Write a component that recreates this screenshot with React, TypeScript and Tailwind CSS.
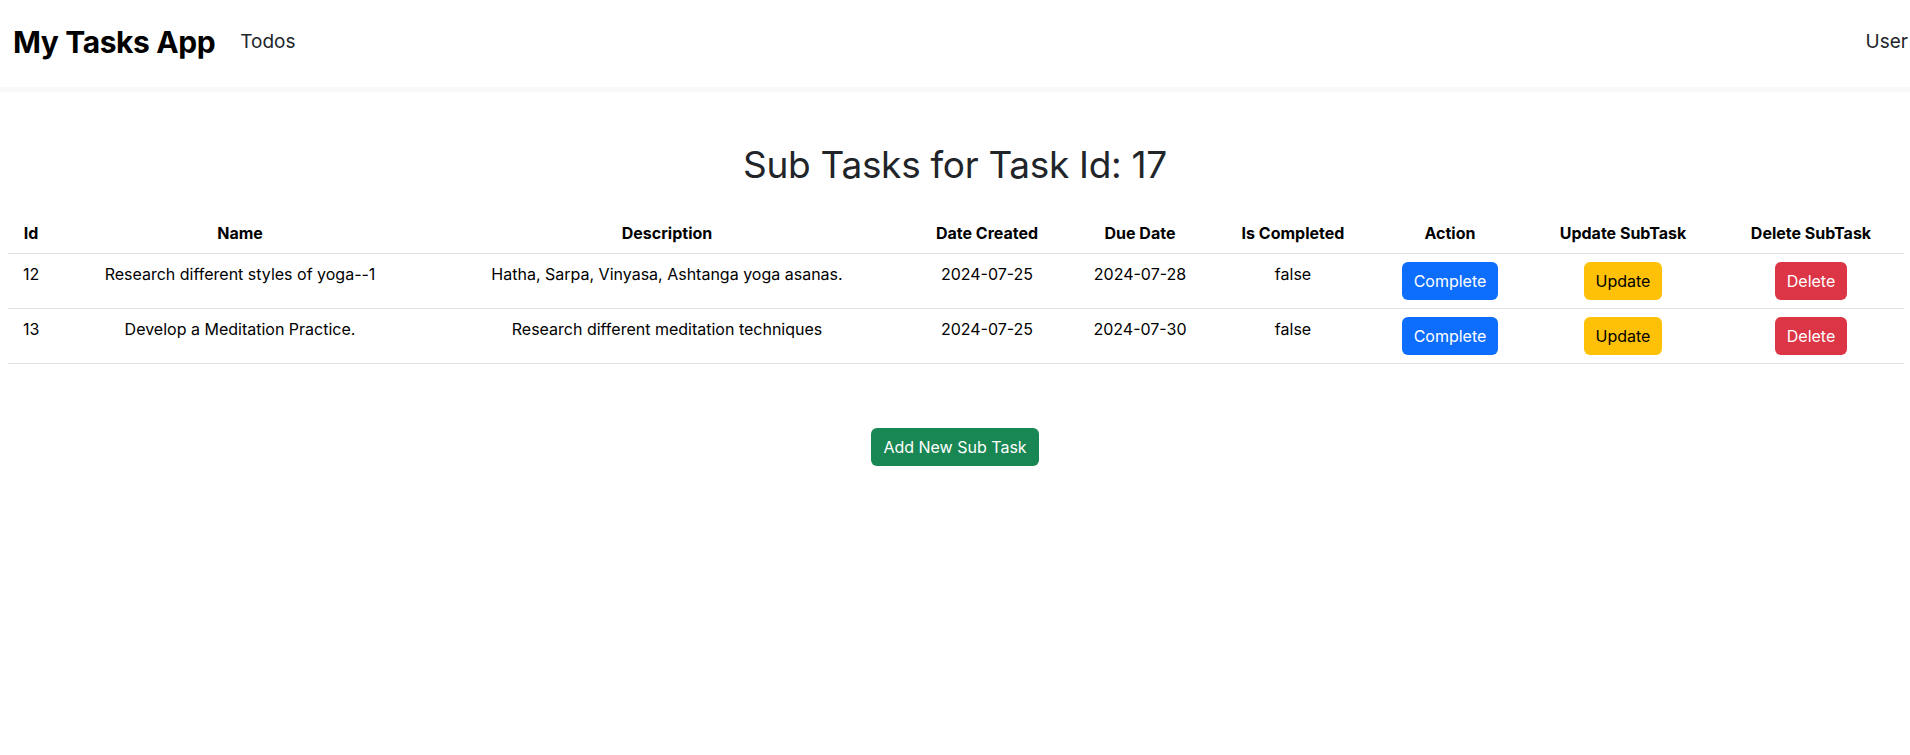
import { FC } from 'react'

interface SubTask {
    id: number;
    name: string;
    description: string;
    dateCreated: string;
    dueDate: string;
    isCompleted: boolean;
}

const subTasks: SubTask[] = [
    { id: 12, name: 'Research different styles of yoga--1', description: 'Hatha, Sarpa, Vinyasa, Ashtanga yoga asanas.', dateCreated: '2024-07-25', dueDate: '2024-07-28', isCompleted: false },
    { id: 13, name: 'Develop a Meditation Practice.', description: 'Research different meditation techniques', dateCreated: '2024-07-25', dueDate: '2024-07-30', isCompleted: false },
];

const headers = ['Id', 'Name', 'Description', 'Date Created', 'Due Date', 'Is Completed', 'Action', 'Update SubTask', 'Delete SubTask'];

const App: FC = () => {
    return (
        <div className="min-h-screen bg-white text-black font-['Inter',sans-serif] text-base">
            {/* navbar */}
            <nav className="h-[87px] flex items-center justify-between pl-[13px] border-b-[5px] border-[#f8f9fa] box-content">
                <div className="flex items-center mt-[-3px]">
                    <span className="text-[30px] font-bold tracking-[-0.4px]">My Tasks App</span>
                    <a href="#" className="ml-[25px] text-[19px] text-[#212529]">Todos</a>
                </div>
                <a href="#" className="text-[19px] text-[#212529] mr-[2px] mt-[-3px]">User</a>
            </nav>

            <h1 className="text-center text-[37px] leading-[1.2] text-[#212529] mt-[51px] mb-[26px] tracking-[-0.3px]">
                Sub Tasks for Task Id: 17
            </h1>

            <div className="pl-2 pr-[6px]">
                <table className="w-full table-fixed text-center">
                    <colgroup>
                        <col className="w-[46px]" />
                        <col className="w-[372px]" />
                        <col className="w-[482px]" />
                        <col className="w-[158px]" />
                        <col className="w-[148px]" />
                        <col className="w-[158px]" />
                        <col className="w-[156px]" />
                        <col className="w-[190px]" />
                        <col className="w-[186px]" />
                    </colgroup>
                    <thead>
                        <tr className="border-b border-[#dee2e6]">
                            {headers.map((h) => (
                                <th key={h} className="px-2 py-2 font-bold whitespace-nowrap">{h}</th>
                            ))}
                        </tr>
                    </thead>
                    <tbody>
                        {subTasks.map((t) => (
                            <tr key={t.id} className="border-b border-[#dee2e6] align-top">
                                <td className="py-2 pr-2 text-left pl-[15px]">{t.id}</td>
                                <td className="px-2 py-2 whitespace-nowrap">{t.name}</td>
                                <td className="px-2 py-2 whitespace-nowrap">{t.description}</td>
                                <td className="px-2 py-2">{t.dateCreated}</td>
                                <td className="px-2 py-2">{t.dueDate}</td>
                                <td className="px-2 py-2">{String(t.isCompleted)}</td>
                                <td className="px-2 py-2">
                                    <button className="h-[38px] px-3 rounded-md bg-[#0d6efd] text-white">Complete</button>
                                </td>
                                <td className="px-2 py-2">
                                    <button className="h-[38px] px-3 rounded-md bg-[#ffc107] text-black">Update</button>
                                </td>
                                <td className="px-2 py-2">
                                    <button className="h-[38px] px-3 rounded-md bg-[#dc3545] text-white">Delete</button>
                                </td>
                            </tr>
                        ))}
                    </tbody>
                </table>
            </div>

            <div className="flex justify-center mt-16">
                <button className="h-[38px] px-3 rounded-md bg-[#198754] text-white">Add New Sub Task</button>
            </div>
        </div>
    );
};

export default App;
